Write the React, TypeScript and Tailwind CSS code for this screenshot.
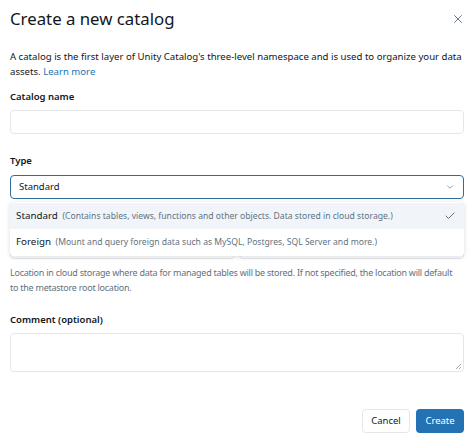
import { X, ChevronDown, Check } from "lucide-react";

const font = { fontFamily: '"Noto Sans", "Open Sans", sans-serif' };

export default function App() {
  return (
    <div className="w-[474px] h-[441px] bg-white text-[#11171c] px-[10px] pt-[7px] overflow-hidden" style={font}>
      {/* Header */}
      <div className="flex items-center justify-between h-6">
        <h1 className="text-[16.8px] leading-6 font-normal">Create a new catalog</h1>
        <X className="w-[14px] h-[14px] text-[#5f7281] mr-[-1px]" strokeWidth={1.6} />
      </div>

      <p className="mt-[18px] text-[9.6px] leading-[15px]">
        A catalog is the first layer of Unity Catalog's three-level namespace and is used to organize your data assets.{" "}
        <a className="text-[#2272b4]">Learn more</a>
      </p>

      {/* Catalog name */}
      <div className="mt-[11px] text-[9.5px] leading-[14px] font-semibold">Catalog name</div>
      <div className="mt-[6px] h-6 rounded border border-[#e3e7eb]" />

      {/* Type */}
      <div className="mt-5 text-[9.5px] leading-[14px] font-semibold">Type</div>
      <div className="relative mt-[7px]">
        <div className="h-6 rounded border-[1.5px] border-[#2f6c9e] flex items-center justify-between pl-[8px] pr-[8px]">
          <span className="text-[9.5px]">Standard</span>
          <ChevronDown className="w-[10px] h-[10px] text-[#5f7281]" strokeWidth={1.6} />
        </div>

        {/* Dropdown menu */}
        <div className="absolute left-0 right-0 top-[27px] z-10 bg-white rounded py-[1px] shadow-[0_1px_5px_rgba(0,0,0,0.14)]">
          <div className="h-[26px] flex items-center justify-between bg-[#f1f5f9] pl-[6px] pr-[8px]">
            <span className="text-[9.8px]">
              Standard <span className="ml-[2px] text-[8.6px] text-[#5f7281]">(Contains tables, views, functions and other objects. Data stored in cloud storage.)</span>
            </span>
            <Check className="w-[12px] h-[12px] text-[#445461]" strokeWidth={1.6} />
          </div>
          <div className="h-[26px] flex items-center pl-[6px] pr-[8px]">
            <span className="text-[9.8px]">
              Foreign <span className="ml-[2px] text-[8.6px] text-[#5f7281]">(Mount and query foreign data such as MySQL, Postgres, SQL Server and more.)</span>
            </span>
          </div>
        </div>
      </div>

      {/* Storage location (hidden behind menu) */}
      <div className="mt-[14px] h-[14px]" />
      <div className="mt-2 flex gap-[4px]">
        <div className="flex-1 h-6 rounded border border-[#e3e7eb]" />
        <div className="flex-1 h-6 rounded border border-[#e3e7eb]" />
      </div>
      <p className="mt-[6px] w-[449px] text-[9px] tracking-[-0.25px] leading-[15px] text-[#5f7281]">
        Location in cloud storage where data for managed tables will be stored. If not specified, the location will default to the metastore root location.
      </p>

      {/* Comment */}
      <div className="mt-[18px] text-[9.5px] leading-[14px] font-semibold">Comment (optional)</div>
      <div className="relative mt-[6px] h-[39px] rounded border border-[#e3e7eb]">
        <svg className="absolute right-[1px] bottom-[1px]" width="7" height="7" viewBox="0 0 7 7">
          <path d="M6 1 L1 6 M6 4 L4 6" stroke="#8a949c" strokeWidth="0.8" />
        </svg>
      </div>

      {/* Footer */}
      <div className="mt-[37px] flex justify-end gap-[6px]">
        <button className="h-6 w-12 rounded border border-[#e3e7eb] bg-white text-[9.5px] text-[#11171c]">Cancel</button>
        <button className="h-6 w-12 rounded bg-[#2272b4] text-[9.5px] text-white">Create</button>
      </div>
    </div>
  );
}
